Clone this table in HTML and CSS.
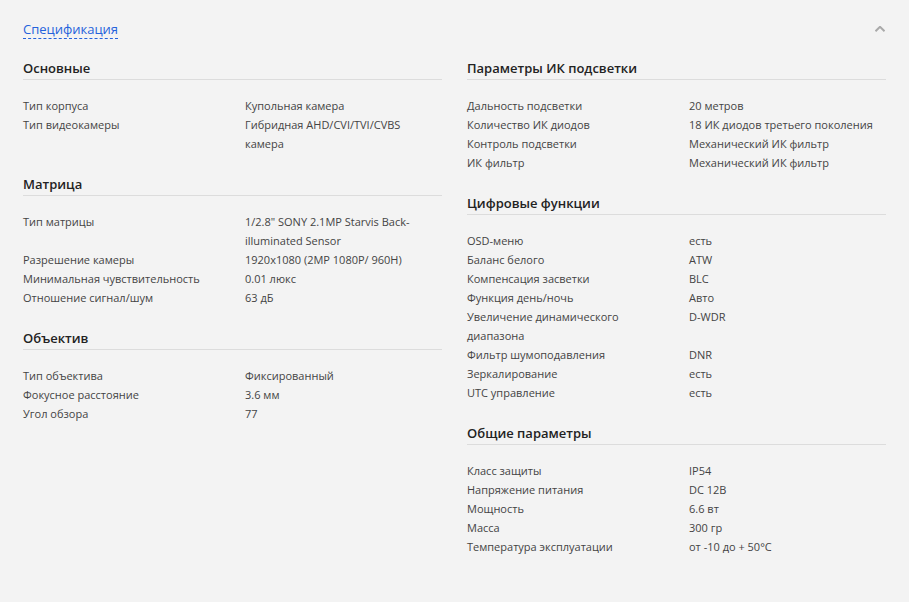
FILE: index.html
```html
<!DOCTYPE html>
<html lang="ru">
<head>
<meta charset="utf-8">
<title>Спецификация</title>
<link rel="stylesheet" href="styles.css">
</head>
<body>
<div class="spec">
  <div class="spec-head">
    <span class="spec-title">Спецификация</span>
    <svg class="chevron" width="10" height="6" viewBox="0 0 10 6"><path d="M0.5 5.2 L5 0.8 L9.5 5.2" fill="none" stroke="#a9a9a9" stroke-width="2"/></svg>
  </div>
  <div class="columns">
    <div class="col">
      <section class="group">
        <h3 class="group-title">Основные</h3>
        <div class="rows">
          <div class="label">Тип корпуса</div><div class="value">Купольная камера</div>
          <div class="label">Тип видеокамеры</div><div class="value">Гибридная AHD/CVI/TVI/CVBS камера</div>
        </div>
      </section>
      <section class="group">
        <h3 class="group-title">Матрица</h3>
        <div class="rows">
          <div class="label">Тип матрицы</div><div class="value">1/2.8" SONY 2.1MP Starvis Back-illuminated Sensor</div>
          <div class="label">Разрешение камеры</div><div class="value">1920x1080 (2MP 1080P/ 960H)</div>
          <div class="label">Минимальная чувствительность</div><div class="value">0.01 люкс</div>
          <div class="label">Отношение сигнал/шум</div><div class="value">63 дБ</div>
        </div>
      </section>
      <section class="group">
        <h3 class="group-title">Объектив</h3>
        <div class="rows">
          <div class="label">Тип объектива</div><div class="value">Фиксированный</div>
          <div class="label">Фокусное расстояние</div><div class="value">3.6 мм</div>
          <div class="label">Угол обзора</div><div class="value">77</div>
        </div>
      </section>
    </div>
    <div class="col">
      <section class="group">
        <h3 class="group-title">Параметры ИК подсветки</h3>
        <div class="rows">
          <div class="label">Дальность подсветки</div><div class="value">20 метров</div>
          <div class="label">Количество ИК диодов</div><div class="value">18 ИК диодов третьего поколения</div>
          <div class="label">Контроль подсветки</div><div class="value">Механический ИК фильтр</div>
          <div class="label">ИК фильтр</div><div class="value">Механический ИК фильтр</div>
        </div>
      </section>
      <section class="group">
        <h3 class="group-title">Цифровые функции</h3>
        <div class="rows">
          <div class="label">OSD-меню</div><div class="value">есть</div>
          <div class="label">Баланс белого</div><div class="value">ATW</div>
          <div class="label">Компенсация засветки</div><div class="value">BLC</div>
          <div class="label">Функция день/ночь</div><div class="value">Авто</div>
          <div class="label">Увеличение динамического диапазона</div><div class="value">D-WDR</div>
          <div class="label">Фильтр шумоподавления</div><div class="value">DNR</div>
          <div class="label">Зеркалирование</div><div class="value">есть</div>
          <div class="label">UTC управление</div><div class="value">есть</div>
        </div>
      </section>
      <section class="group">
        <h3 class="group-title">Общие параметры</h3>
        <div class="rows">
          <div class="label">Класс защиты</div><div class="value">IP54</div>
          <div class="label">Напряжение питания</div><div class="value">DC 12В</div>
          <div class="label">Мощность</div><div class="value">6.6 вт</div>
          <div class="label">Масса</div><div class="value">300 гр</div>
          <div class="label">Температура эксплуатации</div><div class="value">от -10 до + 50°С</div>
        </div>
      </section>
    </div>
  </div>
</div>
</body>
</html>
```

FILE: styles.css
```css
html, body {
  margin: 0;
  padding: 0;
  background: #f3f3f3;
}
body {
  font-family: "Open Sans", "Liberation Sans", sans-serif;
  color: #444;
}
.spec {
  padding: 20px 23px 20px 23px;
}
.spec-head {
  display: flex;
  justify-content: space-between;
  align-items: center;
  height: 19px;
}
.spec-title {
  font-size: 13px;
  line-height: 18px;
  color: #2562dc;
  border-bottom: 1px dashed #2562dc;
}
.chevron {
  margin-right: 1px;
  margin-top: -2px;
}
.columns {
  display: grid;
  grid-template-columns: 1fr 1fr;
  column-gap: 25px;
  margin-top: 19px;
}
.group {
  margin-bottom: 21px;
}
.group-title {
  margin: 0;
  font-size: 13px;
  font-weight: 600;
  line-height: 20px;
  color: #222;
  padding-bottom: 1px;
  border-bottom: 1px solid #dcdcdc;
}
.rows {
  display: grid;
  grid-template-columns: 222px 1fr;
  margin-top: 16px;
  font-size: 11px;
  line-height: 19px;
}
.label {
  padding-right: 20px;
}
.value {
  padding-right: 5px;
}
```
